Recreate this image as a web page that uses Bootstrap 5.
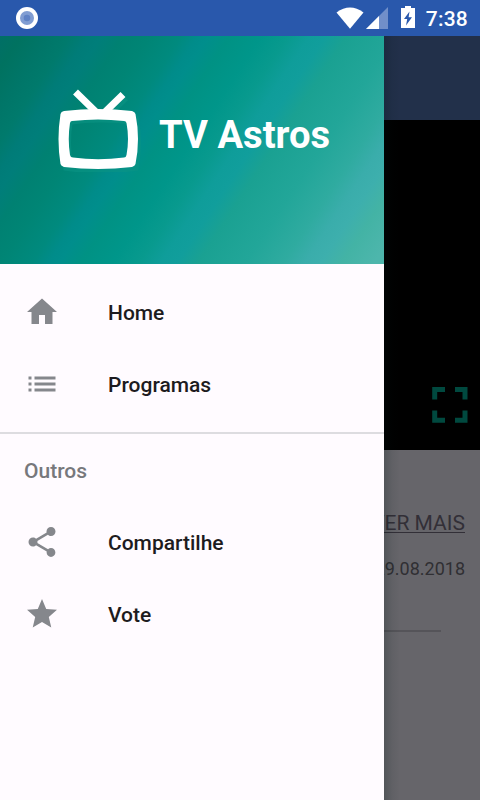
<!DOCTYPE html>
<html lang="pt-BR">
<head>
<meta charset="utf-8">
<meta name="viewport" content="width=device-width, initial-scale=1">
<title>TV Astros</title>
<link href="https://cdn.jsdelivr.net/npm/bootstrap@5.3.0/dist/css/bootstrap.min.css" rel="stylesheet">
<style>
body{font-family:Roboto,"Liberation Sans",sans-serif;background:#66656a;height:800px;overflow:hidden}
.status-bar{height:36px;background:#2958ac;padding:0 12px 0 16px}
.clock{font-size:21px;font-weight:500;line-height:36px;padding-top:1px;margin-left:10px;letter-spacing:.2px}
.screen{height:764px}
.app-bar{height:84px;background:#22304a}
.player{height:330px;background:#000;padding:0 9px 25px 0}
.more-link{font-size:21px;line-height:24px;color:#322f37;text-underline-offset:2px;text-decoration-thickness:1px;letter-spacing:0}
.more-link:hover{color:#322f37}
.date{font-size:18px;line-height:22px;color:#302f33;margin-top:23px}
.details{padding:61px 15px 0 0}
.rule{height:2px;background:#555459;margin:50px 24px 0 39px}
.drawer{width:384px;background:#fffbff;z-index:2}
.drawer::after{content:"";position:absolute;left:100%;top:0;bottom:0;width:16px;background:linear-gradient(90deg,rgba(0,20,20,.2),rgba(0,20,20,.06) 50%,transparent)}
.drawer-header{height:228px;padding-left:54px;background:linear-gradient(123.3deg,#006f66 0,#007260 4%,#007668 9%,#007a6c 13%,#007c78 16.500%,#007e7a 19%,#008172 23%,#008575 28%,#008a7e 34%,#008c8a 37%,#008e8c 39%,#009284 43%,#00968a 49%,#089a8e 54%,#0f9d9a 58%,#119e9c 61%,#1aa192 65%,#22a699 74%,#2faba0 81%,#3aadab 85%,#3dafad 88%,#43b3a5 92%,#4db6ac 98%)}
.brand{font-size:38.200px;font-weight:700;line-height:46px;margin:-30px 0 0 17px;white-space:nowrap;color:#fff}
.tv{margin-top:-41px}
.menu-row{height:72px;padding:3px 0 0 24px;font-size:21px;font-weight:500;color:#1d1b20;text-decoration:none}
.menu-row svg{fill:#85878c;margin-right:48px;flex:none;margin-top:-3px}
.section-title{font-size:21px;font-weight:500;color:#77787c;height:74px;padding:4px 0 0 24px;border-top:2px solid #dddce0}
</style>
</head>
<body>
<header class="status-bar d-flex align-items-center text-white">
  <svg class="me-auto" width="22" height="22" viewBox="0 0 22 22"><circle cx="11" cy="11" r="11" fill="#fff"/><circle cx="11" cy="11" r="7" fill="#819dd2"/><circle cx="11" cy="11" r="3.3" fill="#5f82c5"/></svg>
  <svg width="80" height="36" viewBox="336 0 80 36"><path fill="#fff" d="M336.500 12.500Q350 2.500 363.500 12.500L350 28.800Z"/><path fill="#718fc9" d="M388 7V29H366Z"/><path fill="#fff" d="M379 16V29H366Z"/><path fill="#fff" d="M401 8H405V6H411V8H415V28H401Z"/><path fill="#2958ac" d="M409.500 11.500L404 19H407.200L406 25.500L412 17.300H408.600Z"/></svg>
  <span class="clock">7:38</span>
</header>
<div class="screen position-relative">
  <main>
    <div class="app-bar"></div>
    <div class="player d-flex justify-content-end align-items-end">
      <svg width="42" height="42" viewBox="0 0 42 42" fill="none" stroke="#00493f" stroke-width="5"><path d="M5.700 16.500V6.500H16M26 6.500H36V16.500M36 27.500V37.300H26M16 37.300H5.700V27.500"/></svg>
    </div>
    <section class="details text-end">
      <a class="more-link d-block" href="#">VER MAIS</a>
      <div class="date">29.08.2018</div>
      <div class="rule"></div>
    </section>
  </main>
  <aside class="drawer position-absolute top-0 start-0 h-100">
    <div class="drawer-header d-flex align-items-center">
      <svg class="tv flex-shrink-0" width="88" height="84" viewBox="54 88 88 84">
        <g fill="none" stroke="#0b9585" opacity=".55" transform="translate(3 4)"><path stroke-width="6" d="M75.500 92L97 113M123 94L105 111"/><path stroke-width="10" d="M65 116Q98 111 131 116Q135 139 131 162Q98 167 65 162Q61 139 65 116Z"/></g>
        <path fill="none" stroke="#fff" stroke-width="7" d="M75.500 92L97 113M123 94.500L105 112"/>
        <path fill="#fff" fill-rule="evenodd" d="M64 111Q98 107 132 111Q135 112 135.500 114Q140.500 139 135.500 164Q135 166 132 167Q98 171 64 167Q61 166 60.500 164Q56.500 139 60.500 114Q61 111.500 64 111ZM72 121Q70.500 121 70 123Q67.500 139 70 155Q70.500 157.500 73 157.500Q98 161 124 157.500Q126 157.500 126.500 155Q129.500 139 126.500 123Q126 121 124 121Q98 118 72 121Z"/>
      </svg>
      <div class="brand">TV Astros</div>
    </div>
    <nav>
      <div class="pt-2 pb-2">
        <a class="menu-row d-flex align-items-center mt-1" href="#"><svg width="36" height="36" viewBox="0 0 24 24"><path d="M10 20v-6h4v6h5v-8h3L12 3 2 12h3v8z"/></svg>Home</a>
        <a class="menu-row d-flex align-items-center" href="#"><svg width="36" height="36" viewBox="0 0 24 24"><path d="M3 13h2v-2H3v2zm0 4h2v-2H3v2zm0-8h2V7H3v2zm4 4h14v-2H7v2zm0 4h14v-2H7v2zM7 7v2h14V7H7z"/></svg>Programas</a>
      </div>
      <div class="section-title d-flex align-items-center mt-1">Outros</div>
      <a class="menu-row d-flex align-items-center" href="#"><svg width="36" height="36" viewBox="0 0 24 24"><path d="M18 16.080c-.76 0-1.440.3-1.960.77L8.910 12.700c.05-.23.09-.46.09-.7s-.04-.47-.09-.7l7.050-4.110c.54.5 1.250.81 2.040.81 1.660 0 3-1.340 3-3s-1.340-3-3-3-3 1.340-3 3c0 .24.04.47.09.7L8.040 9.810C7.500 9.310 6.790 9 6 9c-1.660 0-3 1.340-3 3s1.340 3 3 3c.79 0 1.500-.31 2.040-.81l7.120 4.160c-.05.21-.08.43-.08.65 0 1.610 1.310 2.920 2.920 2.920s2.920-1.310 2.920-2.920-1.310-2.920-2.920-2.920z"/></svg>Compartilhe</a>
      <a class="menu-row d-flex align-items-center" href="#"><svg width="36" height="36" viewBox="0 0 24 24"><path d="M12 17.270L18.180 21l-1.640-7.030L22 9.240l-7.190-.61L12 2 9.190 8.630 2 9.240l5.460 4.730L5.820 21z"/></svg>Vote</a>
    </nav>
  </aside>
</div>
<script src="https://cdn.jsdelivr.net/npm/bootstrap@5.3.0/dist/js/bootstrap.bundle.min.js"></script>
</body>
</html>
